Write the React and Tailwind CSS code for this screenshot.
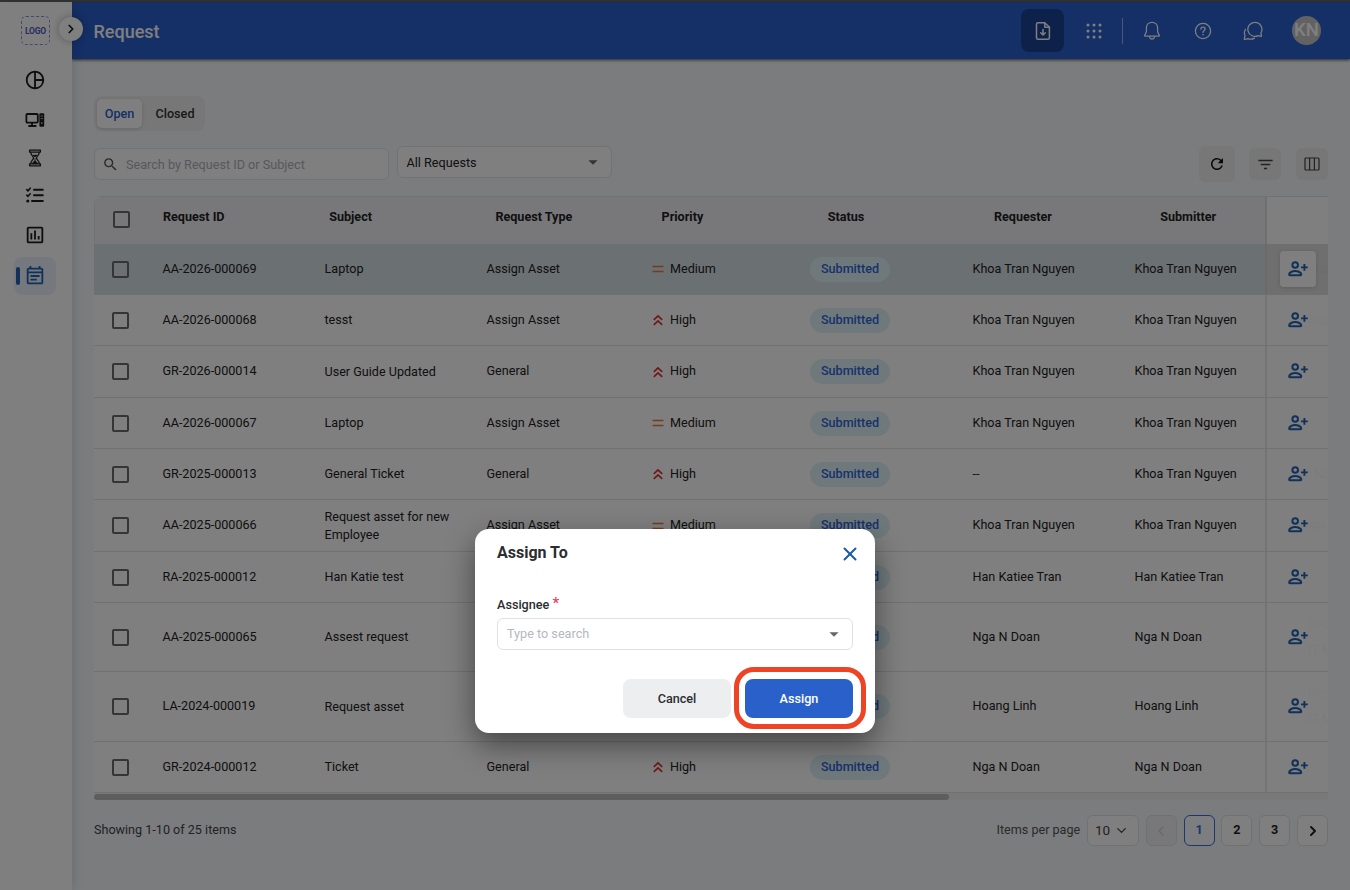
import { clsx } from 'clsx';
import { MdPieChartOutline, MdOutlineEventNote, MdOutlineAssessment, MdSearch, MdFilterList, MdRefresh, MdArrowDropDown } from 'react-icons/md';
import { ChevronRight, ChevronLeft, ChevronDown, X } from 'lucide-react';

const COLUMNS = ['Request ID', 'Subject', 'Request Type', 'Priority', 'Status', 'Requester', 'Submitter'];

const KHOA = 'Khoa Tran Nguyen';

// "under" is the next column, scrolled behind the sticky actions cell
const ROWS = [
    { id: 'AA-2026-000069', subject: 'Laptop', type: 'Assign Asset', priority: 'Medium', requester: KHOA, submitter: KHOA, height: 'h-[51px]', under: ['Support'], chip: true, active: true },
    { id: 'AA-2026-000068', subject: 'tesst', type: 'Assign Asset', priority: 'High', requester: KHOA, submitter: KHOA, height: 'h-[51px]', under: ['Support'], chip: true },
    { id: 'GR-2026-000014', subject: 'User Guide Updated', type: 'General', priority: 'High', requester: KHOA, submitter: KHOA, height: 'h-[51.5px]' },
    { id: 'AA-2026-000067', subject: 'Laptop', type: 'Assign Asset', priority: 'Medium', requester: KHOA, submitter: KHOA, height: 'h-[51.5px]' },
    { id: 'GR-2025-000013', subject: 'General Ticket', type: 'General', priority: 'High', requester: '--', submitter: KHOA, height: 'h-[51px]', under: ['An Nguyen'] },
    { id: 'AA-2025-000066', subject: 'Request asset for new Employee', type: 'Assign Asset', priority: 'Medium', requester: KHOA, submitter: KHOA, height: 'h-[51.5px]', under: [KHOA] },
    { id: 'RA-2025-000012', subject: 'Han Katie test', type: 'Return Asset', priority: 'Medium', requester: 'Han Katiee Tran', submitter: 'Han Katiee Tran', height: 'h-[51.5px]' },
    { id: 'AA-2025-000065', subject: 'Assest request', type: 'Assign Asset', priority: 'Medium', requester: 'Nga N Doan', submitter: 'Nga N Doan', height: 'h-[69px]', under: ['Request', 'IT Mgr'], chip: true },
    { id: 'LA-2024-000019', subject: 'Request asset', type: 'Lost Asset', priority: 'Medium', requester: 'Hoang Linh', submitter: 'Hoang Linh', height: 'h-[69.5px]', under: ['Request', 'IT Mgr'], chip: true },
    { id: 'GR-2024-000012', subject: 'Ticket', type: 'General', priority: 'High', requester: 'Nga N Doan', submitter: 'Nga N Doan', height: 'h-[51.5px]' },
];

function DeviceIcon() {
    return (
        <svg width="20" height="16" viewBox="0 0 20 16" fill="none" stroke="currentColor" strokeWidth="1.8">
            <rect x="1.4" y="2" width="11.4" height="8.6" rx="1" />
            <path d="M7 11v2.6M3.4 14h8" />
            <rect x="14.4" y="1.2" width="4.8" height="13.6" rx="1" fill="currentColor" stroke="none" />
            <path d="M15.6 4h2.4M15.6 6.6h2.4" stroke="#fff" strokeWidth=".6" />
            <circle cx="16.8" cy="11" r=".8" fill="#fff" stroke="none" />
        </svg>
    );
}

function HourglassIcon() {
    return (
        <svg width="14" height="18" viewBox="0 0 14 18" fill="none" stroke="currentColor" strokeWidth="1.3" strokeLinejoin="round">
            <path d="M1.6 1.2h10.8v1.9H1.6zM1.6 14.9h10.8v1.9H1.6z" />
            <path d="M2.7 3.2c0 3.2 2.8 3.8 2.8 5.8s-2.8 2.6-2.8 5.8M11.3 3.2c0 3.2-2.8 3.8-2.8 5.8s2.8 2.6 2.8 5.8" />
            <path d="M5 6.2h4L7 8zM7 9v2.4L4.4 14.4h5.2L7 11.4" fill="currentColor" strokeWidth=".8" />
        </svg>
    );
}

function ChecklistIcon() {
    return (
        <svg width="20" height="18" viewBox="0 0 20 18" fill="none" stroke="currentColor" strokeWidth="2" strokeLinecap="round">
            <path d="M9 3.7h8.8M9 9.3h8.8M7 14.9h10.8" />
            <path d="m1.7 3.6 1.3 1.2 2.2-2.6M1.7 9.2 3 10.4l2.2-2.6" strokeWidth="1.6" />
            <circle cx="2.8" cy="15" r="1.6" fill="currentColor" stroke="none" />
        </svg>
    );
}

function AssignIcon() {
    return (
        <svg width="20" height="16" viewBox="0 0 20 16" fill="none" stroke="currentColor" strokeWidth="2">
            <circle cx="7.2" cy="4" r="2.8" />
            <path d="M1.1 13.5c0-2.1 3.4-3.4 6.1-3.4s6.1 1.3 6.1 3.4c0 .4-.3.7-.7.7H1.8c-.4 0-.7-.3-.7-.7z" />
            <path d="M16.4 3v6.8M13 6.4h6.8" strokeWidth="1.9" />
        </svg>
    );
}

function FileIcon() {
    return (
        <svg width="16" height="20" viewBox="0 0 16 20" fill="none" stroke="currentColor" strokeWidth="1.5" strokeLinejoin="round" strokeLinecap="round">
            <path d="M3 1.7h6.6L14.4 6v10.8c0 .9-.6 1.5-1.5 1.5H3c-.9 0-1.5-.6-1.5-1.5V3.2c0-.9.6-1.5 1.5-1.5z" />
            <path d="M9.8 2v4.2H14M8 8.6v5.2M5.7 11.8 8 14l2.3-2.2" />
        </svg>
    );
}

function GridIcon() {
    return (
        <svg width="16" height="16" viewBox="0 0 16 16" fill="currentColor">
            {[2, 8, 14].map((y) => [2, 8, 14].map((x) => <circle key={`${x}-${y}`} cx={x} cy={y} r="1.5" />))}
        </svg>
    );
}

function BellIcon() {
    return (
        <svg width="18" height="20" viewBox="0 0 18 20" fill="none" stroke="currentColor" strokeWidth="1.25" strokeLinejoin="round">
            <path d="M9 1.4c-3.3 0-5.6 2.5-5.6 5.6v3.7L1.7 14.2c-.2.5 0 .9.6.9h13.4c.6 0 .8-.4.6-.9l-1.7-3.5V7c0-3.1-2.3-5.6-5.6-5.6z" />
            <path d="M6.5 15.3c.1 1.6 1.1 2.9 2.5 2.9s2.4-1.3 2.5-2.9" />
        </svg>
    );
}

function HelpIcon() {
    return (
        <svg width="18" height="18" viewBox="0 0 18 18" fill="none" stroke="currentColor" strokeWidth="1.3" strokeLinecap="round">
            <circle cx="9" cy="9" r="7.6" />
            <path d="M6.9 7.2c0-1.3.9-2.1 2.1-2.1s2.1.8 2.1 2c0 1.6-2.1 1.7-2.1 3.3" />
            <circle cx="9" cy="12.7" r=".5" fill="currentColor" strokeWidth=".5" />
        </svg>
    );
}

function ChatIcon() {
    return (
        <svg width="20" height="20" viewBox="0 0 20 20" fill="none" stroke="currentColor" strokeWidth="1.25" strokeLinejoin="round" strokeLinecap="round">
            <path d="M11.7 1.4a7 7 0 1 0 3.4 13.2c1.2.4 2.3.6 3.4.7-.1-1.2-.3-2.2-.6-3.3a7 7 0 0 0-6.2-10.6z" />
            <path d="M2.5 8.3c-1.3 2-1.4 4.3-.5 6.3-.3 1.2-.6 2.4-.7 3.7 1.3-.1 2.5-.3 3.7-.7 2 .9 4.5.7 6.4-.5" />
        </svg>
    );
}

function ColumnsIcon() {
    return (
        <svg width="16" height="14" viewBox="0 0 16 14" fill="none" stroke="currentColor" strokeWidth="1.2">
            <rect x="1" y="1" width="14" height="12" rx="1" />
            <path d="M5.6 1v12M10.4 1v12" />
        </svg>
    );
}

function PriorityIcon({ level }) {
    if (level === 'Medium') {
        return (
            <svg width="12" height="12" viewBox="0 0 12 12" stroke="#e8783c" strokeWidth="1.5">
                <path d="M.5 3.5h11M.5 8.5h11" />
            </svg>
        );
    }
    return (
        <svg width="12" height="12" viewBox="0 0 12 12" fill="none" stroke="#dc2f2f" strokeWidth="1.7">
            <path d="m1.8 5.8 4.2-3.9 4.2 3.9M1.8 10.8 6 6.9l4.2 3.9" />
        </svg>
    );
}

function Checkbox() {
    return <span className="block size-[17px] shrink-0 rounded-[2px] border-2 border-[#6a6a6a]" />;
}

function Sidebar() {
    return (
        <aside className="relative z-10 flex w-[72px] shrink-0 flex-col items-center bg-white pr-px text-[#1d1d1d] shadow-[2px_0_10px_rgba(0,0,0,0.12)]">
            <div className="mt-[14px] flex size-[29px] items-center justify-center rounded-[5px] border border-dashed border-[#8793dc] pt-px text-[8.5px] font-bold tracking-[-0.2px] text-[#4a5bc8]">LOGO</div>
            <div className="absolute top-[15px] left-[59px] flex size-6 items-center justify-center rounded-full bg-white shadow-[0_0_8px_rgba(0,0,0,0.3)]">
                <ChevronRight size={14} strokeWidth={3} />
            </div>
            <nav className="-ml-px flex flex-col items-center">
                <div className="mt-[24px] flex h-[22px] items-center"><MdPieChartOutline size={22} /></div>
                <div className="mt-[20px] flex h-[18px] items-center"><DeviceIcon /></div>
                <div className="mt-[19.5px] flex h-[18px] items-center"><HourglassIcon /></div>
                <div className="mt-[19.5px] flex h-[18px] items-center"><ChecklistIcon /></div>
                <div className="mt-[20px] flex h-[22px] items-center"><MdOutlineAssessment size={22} /></div>
                <div className="mt-[11px] flex h-[38px] w-[42px] items-center gap-1 rounded-lg bg-[#ebf2fc] pl-[2px] text-[#2463b4]">
                    <span className="h-[18px] w-1 rounded-full bg-[#2463b4]" />
                    <MdOutlineEventNote size={22} />
                </div>
            </nav>
        </aside>
    );
}

function Header() {
    return (
        <header className="relative flex h-[57px] items-center bg-[#2b60cf] pr-[29px] pl-[21.5px] text-white shadow-[0_1px_3px_rgba(0,0,0,0.7)]">
            <h1 className="grow pt-px text-[18px] font-medium">Request</h1>
            <div className="flex size-[43px] items-center justify-center rounded-lg bg-[#1a4395] pl-px"><FileIcon /></div>
            <div className="ml-[21.5px]"><GridIcon /></div>
            <div className="ml-[20.5px] h-[26px] w-px bg-white/50" />
            <div className="ml-[20px]"><BellIcon /></div>
            <div className="ml-[32.5px]"><HelpIcon /></div>
            <div className="ml-[31px]"><ChatIcon /></div>
            <div className="ml-[29.5px] flex size-[29px] items-center justify-center rounded-full bg-[#c4c4c4] text-[18.5px] font-medium">KN</div>
        </header>
    );
}

function Toolbar() {
    return (
        <div className="flex h-9 items-center">
            <div className="flex h-8 w-[295px] items-center rounded-md border border-[#e2e4e8] bg-white pl-[7px] text-[12.65px] text-[#adb1b8]">
                <MdSearch size={17} className="mr-[7px] text-[#555]" />
                <span className="pt-[2px]">Search by Request ID or Subject</span>
            </div>
            <div className="mb-1 ml-[7.5px] flex h-8 w-[215px] items-center justify-between rounded-md border border-[#e2e4e8] bg-white pr-[7px] pl-[9px] text-[12.65px] text-[#222]">
                <span className="pt-[2px]">All Requests</span>
                <MdArrowDropDown size={22} className="text-[#666]" />
            </div>
            <div className="ml-auto flex items-center text-[#444]">
                <div className="flex size-9 items-center justify-center rounded-md bg-[#eeeeee] text-[#111]"><MdRefresh size={18} /></div>
                <div className="ml-[14px] flex size-8 items-center justify-center rounded-md bg-[#eeeeee]"><MdFilterList size={19} /></div>
                <div className="ml-[15px] flex size-8 items-center justify-center rounded-md bg-[#eeeeee]"><ColumnsIcon /></div>
            </div>
        </div>
    );
}

function RequestRow({ row }) {
    return (
        <div className={clsx('flex border-b', row.height, row.active ? 'border-[#d7e0e6] bg-[#d7e0e6]' : 'border-[#e2e2e2] bg-white')}>
            <div className="flex w-[1171px] shrink-0 items-center pt-[0.8px] pl-[18px]">
                <Checkbox />
                <div className="ml-[33.5px] w-[162px] shrink-0">{row.id}</div>
                <div className="w-[162px] shrink-0 pr-6 leading-[18px]">{row.subject}</div>
                <div className="w-[162px] shrink-0">{row.type}</div>
                <div className="flex w-[161.5px] shrink-0 items-center gap-[6.5px] pl-[3px]">
                    <PriorityIcon level={row.priority} />
                    {row.priority}
                </div>
                <div className="w-[162.5px] shrink-0">
                    <span className="inline-flex h-[25px] w-[80px] items-center justify-center rounded-full bg-[#dff3f9] font-medium text-[#2e64d8]">Submitted</span>
                </div>
                <div className="w-[162px] shrink-0">{row.requester}</div>
                <div className="grow whitespace-nowrap">{row.submitter}</div>
            </div>
            <div className="relative flex w-[63px] shrink-0 items-center overflow-hidden">
                {row.under && (
                    <div className={clsx('absolute top-1/2 left-[31px] -translate-y-1/2 leading-[26px] whitespace-nowrap', row.chip && 'rounded-2xl bg-[#eef1f6] px-3')}>
                        {row.under.map((line) => <p key={line}>{line}</p>)}
                    </div>
                )}
                <div className={clsx('relative flex h-full w-[62.5px] items-center border-l-2 pl-[12.5px]', row.active ? 'border-[#d2d4d6] bg-[#dedede]/97' : 'border-[#e8e8e8] bg-white/97')}>
                    <div className={clsx('flex size-9 items-center justify-center rounded text-[#2463b4]', row.active && 'bg-white shadow-[0_1px_4px_rgba(0,0,0,0.15)]')}>
                        <AssignIcon />
                    </div>
                </div>
            </div>
        </div>
    );
}

function RequestTable() {
    return (
        <div className="overflow-hidden rounded-tl-lg text-[12.6px] text-[#222]">
            <div className="flex h-12 border-t border-[#e0e2e6] bg-[#f0f1f4] font-bold">
                <div className="flex w-[1171px] shrink-0 items-center border-l border-[#e4e6ea] pb-[2px] pl-[18px]">
                    <Checkbox />
                    <div className="mb-1 ml-[33px] flex">
                        {COLUMNS.map((name) => (
                            <div key={name} className="w-[166.2px] shrink-0">{name}</div>
                        ))}
                    </div>
                </div>
                <div className="w-[63px] shrink-0 border-l-2 border-[#dcdee2] bg-white" />
            </div>
            {ROWS.map((row) => <RequestRow key={row.id} row={row} />)}
            <div className="h-[7px] bg-[#f3f3f3] py-px">
                <div className="h-[6px] w-[855px] rounded-full bg-[#bcbcbc]" />
            </div>
        </div>
    );
}

function PageButton({ children, className }) {
    return (
        <div className={clsx('flex size-[31px] items-center justify-center rounded-md border text-[12.65px] font-bold', className)}>
            {children}
        </div>
    );
}

function Pagination() {
    return (
        <div className="mt-[15px] flex h-[31px] items-center gap-[6.8px] text-[12.6px] text-[#222]">
            <p className="grow text-[#444]">Showing 1-10 of 25 items</p>
            <p className="text-[#555]">Items per page</p>
            <div className="flex h-[31px] w-[52px] items-center justify-between rounded-md border border-[#e0e2e6] bg-white pr-[9px] pl-[7px] text-[13.5px] text-[#444]">
                10
                <ChevronDown size={15} strokeWidth={2} />
            </div>
            <PageButton className="border-[#e0e2e6] bg-[#f0f1f4] text-[#d0d2d6]"><ChevronLeft size={16} /></PageButton>
            <PageButton className="border-[#3a6be0] bg-[#fbfcff] text-[#3a6be0]">1</PageButton>
            <PageButton className="border-[#e0e2e6] bg-white">2</PageButton>
            <PageButton className="border-[#e0e2e6] bg-white">3</PageButton>
            <PageButton className="border-[#e0e2e6] bg-white"><ChevronRight size={16} strokeWidth={3} /></PageButton>
        </div>
    );
}

function AssignModal() {
    return (
        <div className="absolute top-[528.5px] left-[475px] flex h-[204.5px] w-[400px] flex-col rounded-[14px] bg-white px-[22px] text-[#2b2d31] shadow-[0_12px_30px_rgba(0,0,0,0.45)]">
            <div className="mt-[12.5px] flex h-6 items-center justify-between">
                <h2 className="text-[16px] font-bold">Assign To</h2>
                <X size={22} strokeWidth={2.2} className="mt-[1px] -mr-[8px] shrink-0 text-[#1f5aa8]" />
            </div>
            <label className="mt-[30px] text-[12.65px] leading-[18px] font-medium">
                Assignee <span className="relative -top-[1px] text-[15px] text-[#e8405f]">*</span>
            </label>
            <div className="mt-[4px] flex h-8 shrink-0 items-center justify-between rounded-md border border-[#dfe1e5] pr-[7px] pl-[9px] text-[12.65px] text-[#b4b8be]">
                Type to search
                <MdArrowDropDown size={22} className="text-[#666]" />
            </div>
            <div className="mt-[29px] flex justify-end gap-[14px] text-[12.65px] font-medium">
                <button className="h-[39px] w-[108px] rounded-lg bg-[#edeef0] pt-px">Cancel</button>
                <button className="relative h-[39px] w-[108px] rounded-lg bg-[#2a60ca] pt-px text-white">
                    Assign
                    <span className="absolute -top-[12px] -right-[12.5px] -bottom-[10.5px] -left-[11px] rounded-[20px] border-[5px] border-[#ec4425]" />
                </button>
            </div>
        </div>
    );
}

export default function App() {
    return (
        <div className="relative flex h-[890px] w-[1350px] flex-col overflow-hidden bg-[#f7f9fc] font-[Roboto,sans-serif]">
            <div className="h-[2px] shrink-0 bg-[#666]" />
            <div className="flex grow">
                <Sidebar />
                <div className="flex grow flex-col">
                    <Header />
                    <main className="flex w-[1256px] flex-col pt-[37px] pl-[22px]">
                        <div className="flex h-[35px] w-[111px] items-center rounded-lg bg-[#efefef] p-[3px] text-[12.65px] font-medium">
                            <div className="flex h-[29px] w-[45px] items-center justify-center rounded-[5px] bg-white pt-px text-[#2b60cf] shadow-[0_1px_4px_rgba(0,0,0,0.15)]">Open</div>
                            <div className="grow pt-px pl-[6px] text-center text-[#333]">Closed</div>
                        </div>
                        <div className="mt-[15px] mb-[14px]"><Toolbar /></div>
                        <RequestTable />
                        <Pagination />
                    </main>
                </div>
            </div>
            <div className="absolute inset-0 z-20 bg-black/50">
                <AssignModal />
            </div>
        </div>
    );
}
